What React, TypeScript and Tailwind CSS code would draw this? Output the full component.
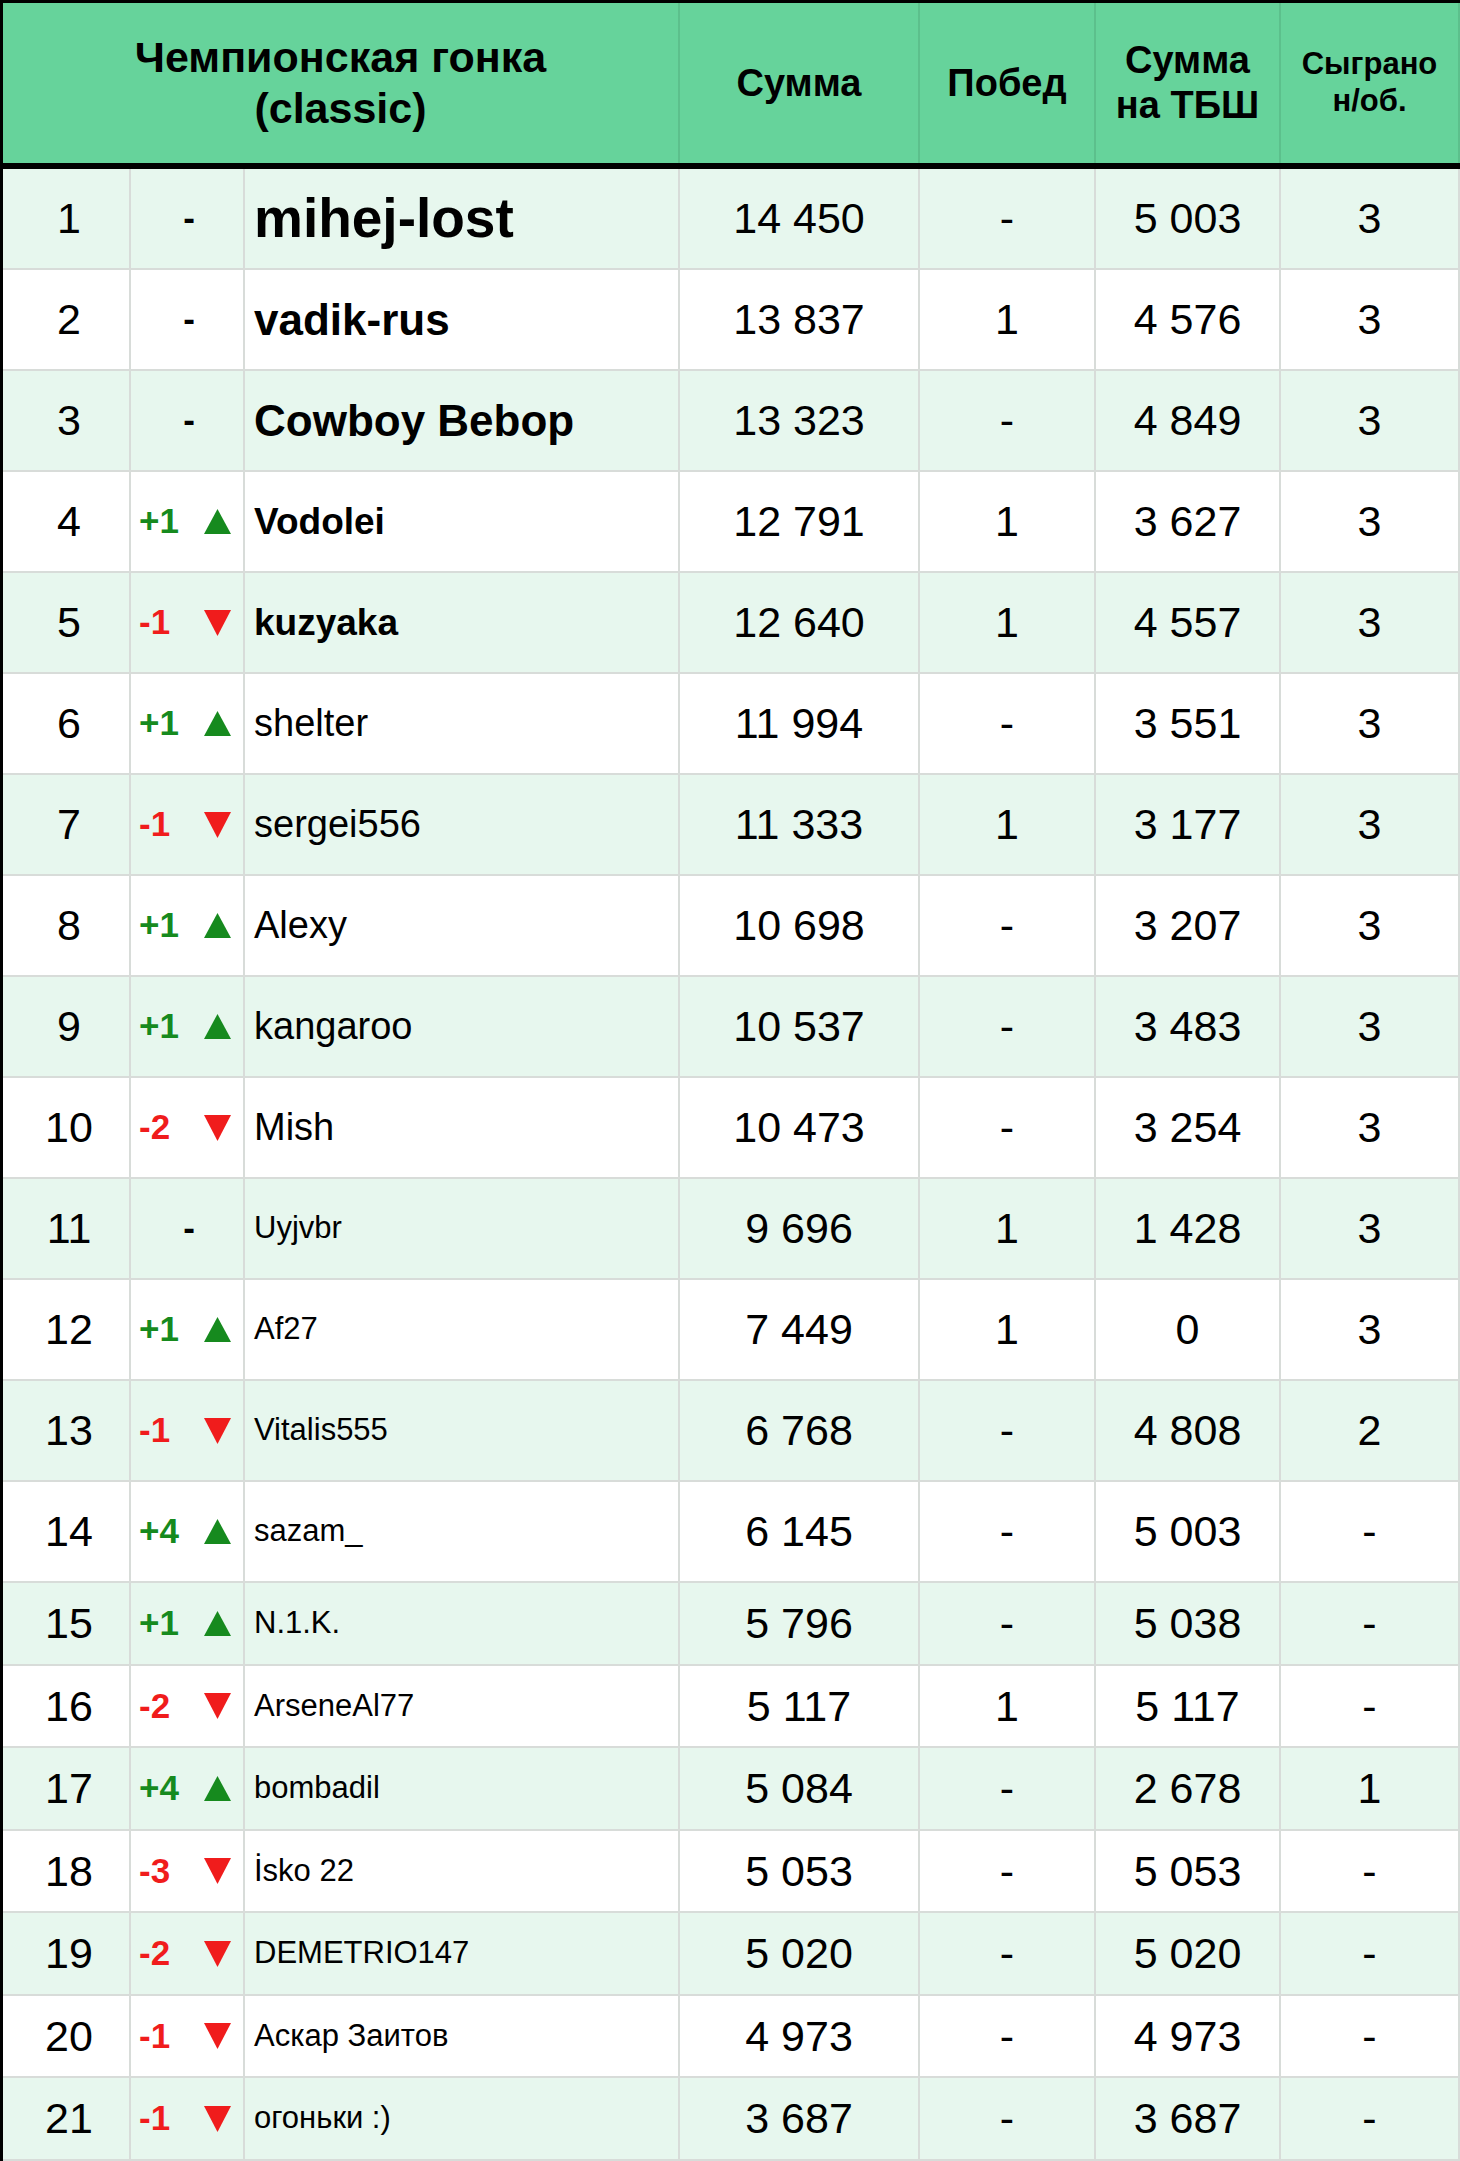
import React from "react";

type Row = {
    rank: number;
    change: number;
    name: string;
    sum: string;
    wins: string;
    tbsh: string;
    played: string;
};

const rows: Row[] = [
    { rank: 1, change: 0, name: "mihej-lost", sum: "14 450", wins: "-", tbsh: "5 003", played: "3" },
    { rank: 2, change: 0, name: "vadik-rus", sum: "13 837", wins: "1", tbsh: "4 576", played: "3" },
    { rank: 3, change: 0, name: "Cowboy Bebop", sum: "13 323", wins: "-", tbsh: "4 849", played: "3" },
    { rank: 4, change: 1, name: "Vodolei", sum: "12 791", wins: "1", tbsh: "3 627", played: "3" },
    { rank: 5, change: -1, name: "kuzyaka", sum: "12 640", wins: "1", tbsh: "4 557", played: "3" },
    { rank: 6, change: 1, name: "shelter", sum: "11 994", wins: "-", tbsh: "3 551", played: "3" },
    { rank: 7, change: -1, name: "sergei556", sum: "11 333", wins: "1", tbsh: "3 177", played: "3" },
    { rank: 8, change: 1, name: "Alexy", sum: "10 698", wins: "-", tbsh: "3 207", played: "3" },
    { rank: 9, change: 1, name: "kangaroo", sum: "10 537", wins: "-", tbsh: "3 483", played: "3" },
    { rank: 10, change: -2, name: "Mish", sum: "10 473", wins: "-", tbsh: "3 254", played: "3" },
    { rank: 11, change: 0, name: "Uyjvbr", sum: "9 696", wins: "1", tbsh: "1 428", played: "3" },
    { rank: 12, change: 1, name: "Af27", sum: "7 449", wins: "1", tbsh: "0", played: "3" },
    { rank: 13, change: -1, name: "Vitalis555", sum: "6 768", wins: "-", tbsh: "4 808", played: "2" },
    { rank: 14, change: 4, name: "sazam_", sum: "6 145", wins: "-", tbsh: "5 003", played: "-" },
    { rank: 15, change: 1, name: "N.1.K.", sum: "5 796", wins: "-", tbsh: "5 038", played: "-" },
    { rank: 16, change: -2, name: "ArseneAl77", sum: "5 117", wins: "1", tbsh: "5 117", played: "-" },
    { rank: 17, change: 4, name: "bombadil", sum: "5 084", wins: "-", tbsh: "2 678", played: "1" },
    { rank: 18, change: -3, name: "İsko 22", sum: "5 053", wins: "-", tbsh: "5 053", played: "-" },
    { rank: 19, change: -2, name: "DEMETRIO147", sum: "5 020", wins: "-", tbsh: "5 020", played: "-" },
    { rank: 20, change: -1, name: "Аскар Заитов", sum: "4 973", wins: "-", tbsh: "4 973", played: "-" },
    { rank: 21, change: -1, name: "огоньки :)", sum: "3 687", wins: "-", tbsh: "3 687", played: "-" },
];

// name sizes drop as you go down the table
const nameClass = (rank: number) => {
    if (rank === 1) return "text-[55px] font-bold";
    if (rank <= 3) return "text-[44px] font-bold";
    if (rank <= 5) return "text-[37px] font-bold";
    if (rank <= 10) return "text-[38px]";
    return "text-[31px]";
};

const rowHeight = (rank: number) => {
    if (rank <= 14) return "h-[101px]";
    return rank % 2 === 1 ? "h-[83px]" : "h-[82px]";
};

const Up = () => (
    <svg width="27" height="25" viewBox="0 0 27 25">
        <polygon points="13.5,0 27,25 0,25" fill="#168a1e" />
    </svg>
);

const Down = () => (
    <svg width="27" height="26" viewBox="0 0 27 26">
        <polygon points="0,0 27,0 13.5,26" fill="#f01c1c" />
    </svg>
);

const cols = "grid grid-cols-[128px_114px_435px_240px_176px_185px_179px]";
const cell = "border-r-2 border-[#d8dcd9] flex items-center";

export default function App() {
    return (
        <div className="w-[1460px] font-['Liberation_Sans',Arial,sans-serif] text-black border-l-[3px] border-t-[3px] border-black bg-white">
            <div className={`${cols} h-[160px] bg-[#66d39b] font-bold leading-[1.18]`}>
                <div className="col-span-3 border-r-2 border-[#5cc08c] flex items-center justify-center text-center text-[43px]">
                    Чемпионская гонка<br />(classic)
                </div>
                <div className="border-r-2 border-[#5cc08c] flex items-center justify-center text-[38px]">Сумма</div>
                <div className="border-r-2 border-[#5cc08c] flex items-center justify-center text-[38px]">Побед</div>
                <div className="border-r-2 border-[#5cc08c] flex items-center justify-center text-center text-[38px]">
                    Сумма<br />на ТБШ
                </div>
                <div className="border-r-2 border-[#5cc08c] flex items-center justify-center text-center text-[31px]">
                    Сыграно<br />н/об.
                </div>
            </div>
            <div className="h-[6px] bg-black" />

            {rows.map((r) => (
                <div
                    key={r.rank}
                    className={`${cols} ${rowHeight(r.rank)} border-b-2 border-[#d8dcd9] ${r.rank % 2 === 1 ? "bg-[#e7f7ee]" : "bg-white"}`}
                >
                    <div className={`${cell} justify-center pl-[6px] text-[43px]`}>{r.rank}</div>
                    <div className={`${cell} text-[35px] font-bold ${r.change === 0 ? "justify-center pl-[4px]" : "justify-between pl-[8px] pr-[12px]"}`}>
                        {r.change === 0 ? (
                            <span>-</span>
                        ) : r.change > 0 ? (
                            <>
                                <span className="text-[#168a1e]">+{r.change}</span>
                                <Up />
                            </>
                        ) : (
                            <>
                                <span className="text-[#f01c1c]">{r.change}</span>
                                <Down />
                            </>
                        )}
                    </div>
                    <div className={`${cell} pl-[9px] whitespace-nowrap ${nameClass(r.rank)}`}>{r.name}</div>
                    <div className={`${cell} justify-center text-[43px]`}>{r.sum}</div>
                    <div className={`${cell} justify-center text-[43px]`}>{r.wins}</div>
                    <div className={`${cell} justify-center text-[43px]`}>{r.tbsh}</div>
                    <div className={`${cell} justify-center text-[43px]`}>{r.played}</div>
                </div>
            ))}
        </div>
    );
}
